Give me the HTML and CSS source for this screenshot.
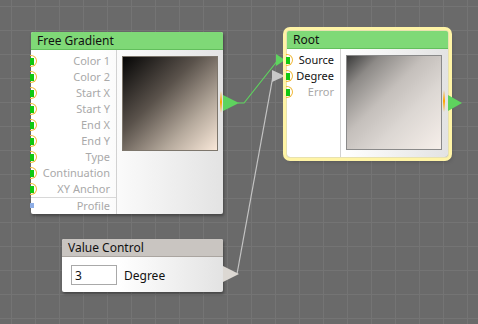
FILE: index.html
```html
<!DOCTYPE html>
<html lang="en">
<head>
  <meta charset="UTF-8" />
  <title>Node Graph</title>
  <link rel="stylesheet" href="styles.css">
</head>
<body>

  <div class="canvas">
    <svg class="wires" width="478" height="324" viewBox="0 0 478 324">
      <!-- gradient output -> root source -->
      <polyline points="238,103 244,103 278,60" fill="none" stroke="#5ed35e" stroke-width="1.2"/>
      <polygon points="276,54 285,60 276,66" fill="#5ed35e"/>
      <!-- value control -> root degree -->
      <line x1="237" y1="274" x2="273" y2="76" stroke="#c4c4c4" stroke-width="1.2"/>
      <polygon points="272,70 285,76 272,82" fill="#c8c8c8"/>
    </svg>

    <!-- Free Gradient node -->
    <div class="node node-gradient">
      <div class="node-head">Free Gradient</div>
      <div class="node-body">
        <div class="ports ports-wide">
          <div class="port"><span class="pin"></span>Color 1</div>
          <div class="port"><span class="pin"></span>Color 2</div>
          <div class="port"><span class="pin"></span>Start X</div>
          <div class="port"><span class="pin"></span>Start Y</div>
          <div class="port"><span class="pin"></span>End X</div>
          <div class="port"><span class="pin"></span>End Y</div>
          <div class="port"><span class="pin"></span>Type</div>
          <div class="port"><span class="pin"></span>Continuation</div>
          <div class="port"><span class="pin"></span>XY Anchor</div>
          <div class="port port-sep"><span class="pin pin-blue"></span>Profile</div>
        </div>
        <div class="preview-cell">
          <div class="preview preview-gradient"></div>
        </div>
      </div>
      <span class="out-bar"></span>
      <span class="out"></span>
    </div>

    <!-- Root node -->
    <div class="node node-root selected">
      <div class="node-head">Root</div>
      <div class="node-body">
        <div class="ports ports-narrow">
          <div class="port active"><span class="pin"></span>Source</div>
          <div class="port active"><span class="pin"></span>Degree</div>
          <div class="port"><span class="pin"></span>Error</div>
        </div>
        <div class="preview-cell">
          <div class="preview preview-root"></div>
        </div>
      </div>
      <span class="out-bar"></span>
      <span class="out"></span>
    </div>

    <!-- Value Control node -->
    <div class="node node-value">
      <div class="node-head">Value Control</div>
      <div class="value-row">
        <input class="value-input" type="text" value="3">
        <span class="value-label">Degree</span>
      </div>
      <span class="out out-gray"></span>
    </div>
  </div>

</body>
</html>
```

FILE: styles.css
```css
body {
  margin: 0;
  padding: 0;
  background-color: #6a6a6a;
  font-family: 'Noto Sans', 'Open Sans', sans-serif;
  overflow: hidden;
}

.canvas {
  position: relative;
  width: 478px;
  height: 324px;
  background-color: #6a6a6a;
  background-image:
    linear-gradient(to right, #747474 1px, transparent 1px),
    linear-gradient(to bottom, #747474 1px, transparent 1px);
  background-size: 24px 24px;
  background-position: 11px 6px;
}

.wires {
  position: absolute;
  left: 0;
  top: 0;
}

.node {
  position: absolute;
  background: linear-gradient(to right, #ffffff 35%, #e3e3e3);
  box-shadow: 1px 2px 3px rgba(0, 0, 0, 0.35);
  border-radius: 2px;
}

.node-head {
  height: 17px;
  line-height: 17px;
  padding-left: 6px;
  font-size: 12px;
  color: #111;
  background-color: #7fd977;
  border-bottom: 1px solid #62bf5c;
  border-radius: 2px 2px 0 0;
}

.node-body {
  display: flex;
}

.ports {
  padding-top: 3px;
  border-right: 1px solid #d2d2d2;
}

.ports-wide {
  width: 85px;
}

.ports-narrow {
  width: 53px;
}

.port {
  position: relative;
  height: 16px;
  line-height: 16px;
  padding-right: 6px;
  text-align: right;
  font-size: 11px;
  color: #a9a9a9;
}

.port.active {
  color: #111;
}

.port-sep {
  border-top: 1px solid #d8d8d8;
}

.pin {
  position: absolute;
  left: -1px;
  top: 2px;
  width: 6px;
  height: 10px;
  border: 1px solid #f0b93a;
  border-left: none;
  border-radius: 0 6px 6px 0;
}

.pin::after {
  content: '';
  position: absolute;
  left: 0;
  top: 2px;
  width: 4px;
  height: 7px;
  background-color: #10c810;
}

.pin-blue {
  border: none;
  top: 5px;
}

.pin-blue::after {
  top: 0;
  width: 4px;
  height: 5px;
  background-color: #8eaee6;
}

.preview-cell {
  padding: 6px 5px 7px 5px;
}

.preview {
  width: 94px;
  height: 93px;
  border: 1px solid #7d766c;
}

.preview-gradient {
  background: linear-gradient(135deg, #050505 0%, #5a524b 40%, #b5a99c 72%, #f9e8d9 100%);
}

.preview-root {
  border-color: #8a8a8a;
  background: linear-gradient(135deg, #3a3a3a 0%, #8d8a87 18%, #c4bfbb 42%, #dcd7d3 65%, #f6efea 100%);
}

.out-bar {
  position: absolute;
  right: 1px;
  top: 59px;
  width: 2px;
  height: 22px;
  background: linear-gradient(to bottom, rgba(255, 170, 0, 0), #ffa500 50%, rgba(255, 170, 0, 0));
}

.out {
  position: absolute;
  right: -16px;
  top: 63px;
  width: 0;
  height: 0;
  border-left: 16px solid #5ed35e;
  border-top: 8px solid transparent;
  border-bottom: 8px solid transparent;
}

.out-gray {
  top: 27px;
  border-left-color: #dcd8d3;
}

.node-gradient {
  left: 31px;
  top: 32px;
  width: 192px;
  height: 182px;
}

.node-root {
  left: 287px;
  top: 31px;
  width: 161px;
  height: 126px;
}

.node-root .out-bar {
  right: 3px;
}

.node-root .out {
  right: -14px;
  top: 64px;
  border-left-width: 14px;
}

.selected {
  box-shadow: 0 0 0 1px #e8e2b0, 0 0 0 4px #fff4a6, 2px 3px 5px rgba(0, 0, 0, 0.4);
  border-radius: 3px;
}

.node-value {
  left: 62px;
  top: 239px;
  width: 161px;
  height: 53px;
}

.node-value .node-head {
  background-color: #c9c5c1;
  border-bottom-color: #aaa5a0;
}

.value-row {
  display: flex;
  align-items: center;
  gap: 7px;
  padding: 8px 0 0 9px;
}

.value-input {
  width: 41px;
  height: 18px;
  padding: 0 0 0 3px;
  margin: 0;
  border: 1px solid #a9a9a9;
  font-family: 'Noto Sans', 'Open Sans', sans-serif;
  font-size: 12px;
  color: #111;
  background: #fff;
}

.value-label {
  font-size: 12px;
  color: #111;
}
```
